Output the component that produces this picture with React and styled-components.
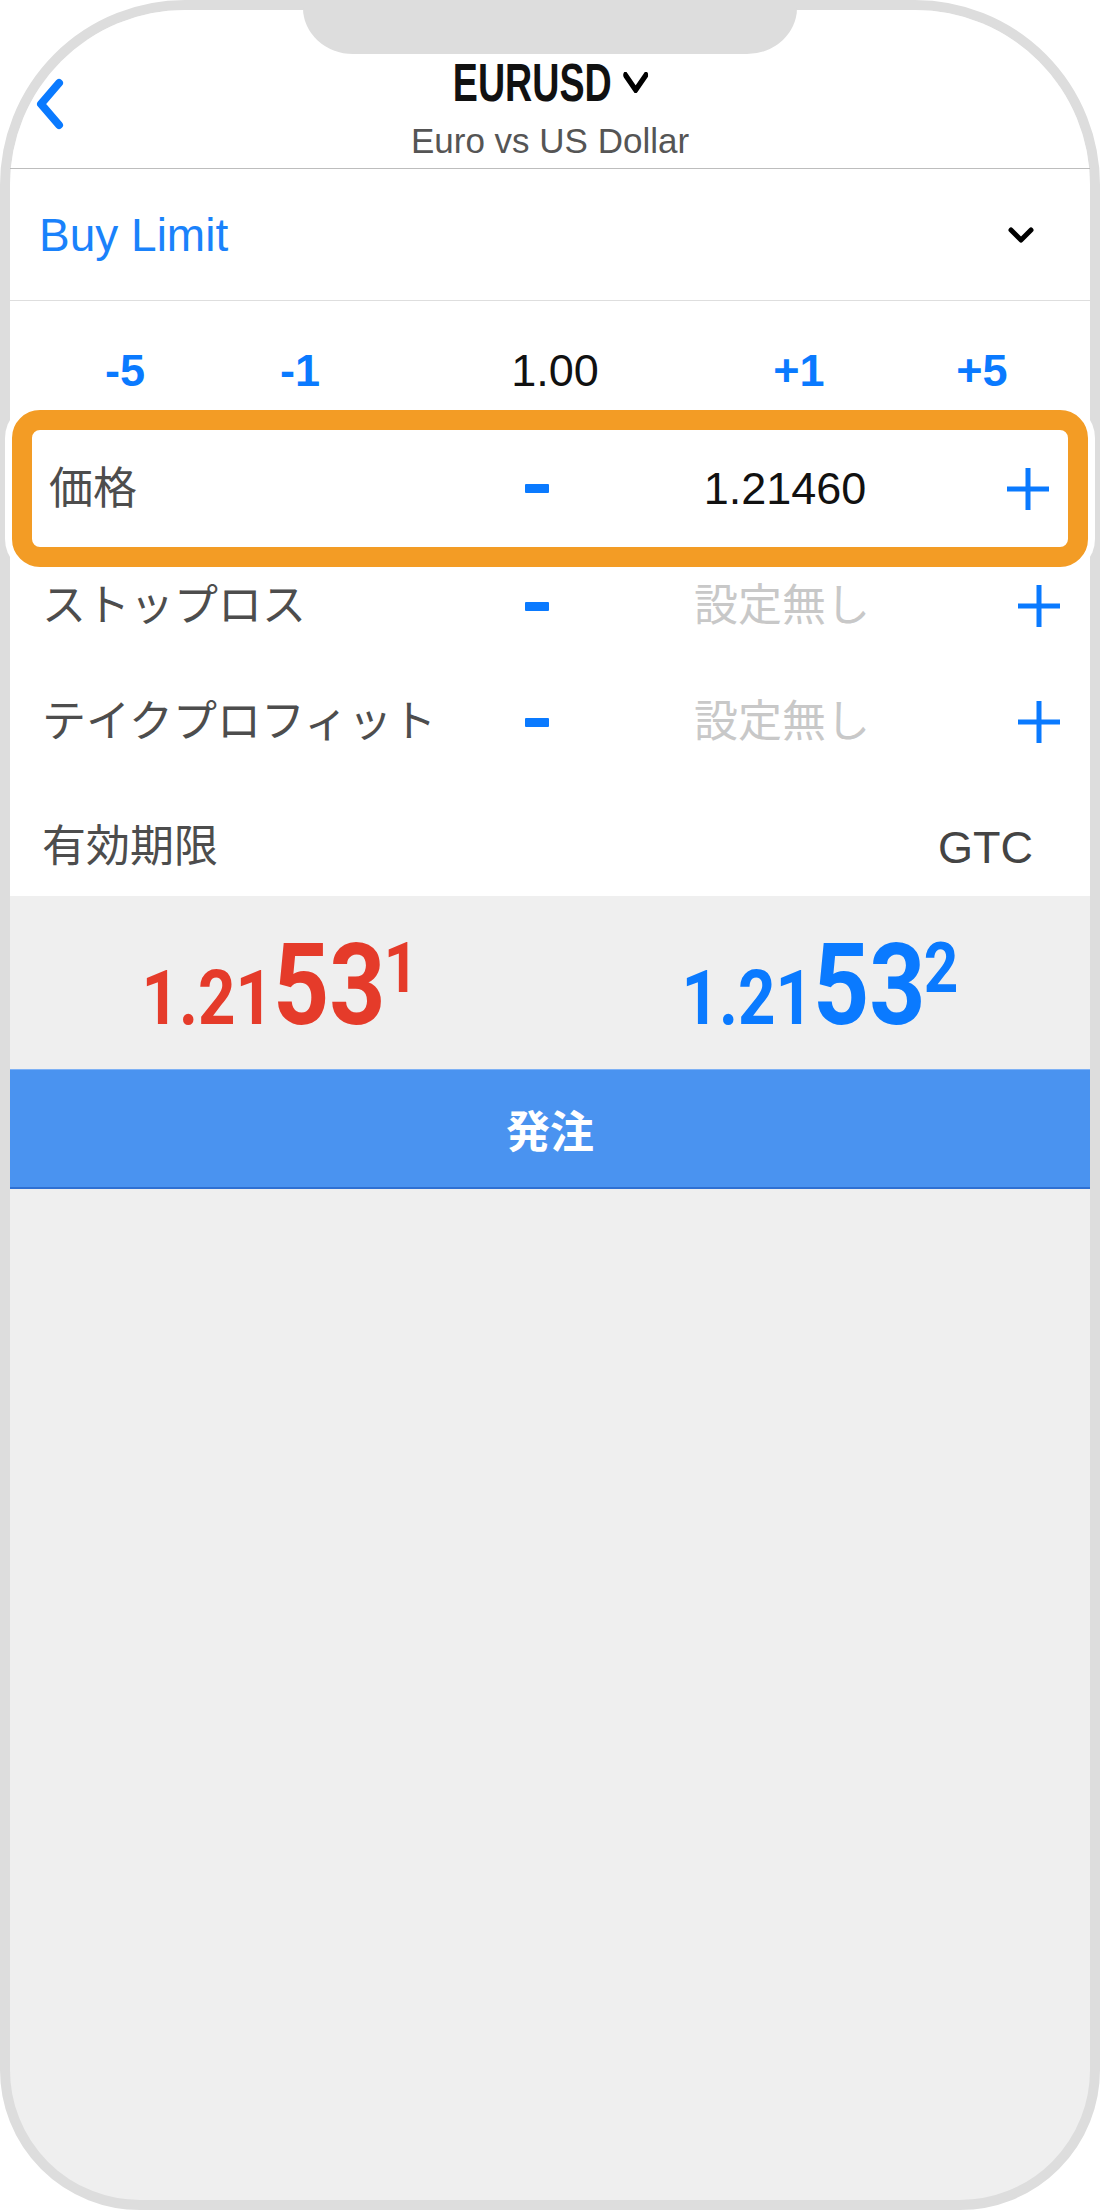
import React from 'react';
import styled, { createGlobalStyle } from 'styled-components';

const BLUE = '#0a7aff';

const GlobalStyle = createGlobalStyle`
  html, body {
    margin: 0;
    padding: 0;
    background: #fff;
  }
  body {
    font-family: "Liberation Sans", "Noto Sans CJK JP", sans-serif;
  }
`;

function BackIcon() {
  return (
    <svg width="40" height="60" viewBox="0 0 40 60">
      <polyline
        points="30,8 12,29 30,50"
        fill="none"
        stroke={BLUE}
        strokeWidth="8"
        strokeLinecap="round"
        strokeLinejoin="round"
      />
    </svg>
  );
}

function ChevronDown({ width = 26, height = 16, stroke = 5 }) {
  return (
    <svg width={width} height={height} viewBox={`0 0 ${width} ${height}`}>
      <polyline
        points={`3,3 ${width / 2},${height - 3} ${width - 3},3`}
        fill="none"
        stroke="#000"
        strokeWidth={stroke}
        strokeLinecap="round"
        strokeLinejoin="round"
      />
    </svg>
  );
}

function MinusIcon() {
  return (
    <svg width="24" height="9" viewBox="0 0 24 9">
      <rect width="24" height="9" rx="1" fill={BLUE} />
    </svg>
  );
}

function PlusIcon() {
  return (
    <svg width="42" height="42" viewBox="0 0 42 42">
      <path d="M21 0 V42 M0 21 H42" stroke={BLUE} strokeWidth="5" />
    </svg>
  );
}

export default function App() {
  return (
    <>
      <GlobalStyle />
      <Phone>
        <Notch />
        <Sheet>
          <Header>
            <BackButton aria-label="back">
              <BackIcon />
            </BackButton>
            <TitleBlock>
              <SymbolRow>
                <Symbol>EURUSD</Symbol>
                <ChevronDown width={35} height={21} stroke={6.5} />
              </SymbolRow>
              <Subtitle>Euro vs US Dollar</Subtitle>
            </TitleBlock>
          </Header>

          <OrderTypeRow>
            <OrderType>Buy Limit</OrderType>
            <ChevronDown />
          </OrderTypeRow>

          <LotRow>
            <LotStep>-5</LotStep>
            <LotStep>-1</LotStep>
            <LotStep $value>1.00</LotStep>
            <LotStep>+1</LotStep>
            <LotStep>+5</LotStep>
          </LotRow>

          <Highlight>
            <PriceRow>
              <Label>価格</Label>
              <IconCell>
                <MinusIcon />
              </IconCell>
              <Value>1.21460</Value>
              <IconCell>
                <PlusIcon />
              </IconCell>
            </PriceRow>
          </Highlight>

          <FieldRow>
            <Label>ストップロス</Label>
            <IconCell>
              <MinusIcon />
            </IconCell>
            <Value $empty>設定無し</Value>
            <IconCell>
              <PlusIcon />
            </IconCell>
          </FieldRow>
          <FieldRow>
            <Label>テイクプロフィット</Label>
            <IconCell>
              <MinusIcon />
            </IconCell>
            <Value $empty>設定無し</Value>
            <IconCell>
              <PlusIcon />
            </IconCell>
          </FieldRow>
          <ExpiryRow>
            <Label>有効期限</Label>
            <Expiry>GTC</Expiry>
          </ExpiryRow>
        </Sheet>

        <QuoteBar>
          <Quote $color="#e53b2a">
            <QuoteSmall>1.21</QuoteSmall>
            <QuoteBig>53</QuoteBig>
            <QuotePip>1</QuotePip>
          </Quote>
          <Quote $color={BLUE}>
            <QuoteSmall>1.21</QuoteSmall>
            <QuoteBig>53</QuoteBig>
            <QuotePip>2</QuotePip>
          </Quote>
        </QuoteBar>

        <SubmitButton>発注</SubmitButton>
        <Filler />
      </Phone>
    </>
  );
}

const Phone = styled.div`
  position: relative;
  box-sizing: border-box;
  width: 1100px;
  height: 2210px;
  border: 10px solid #dddddd;
  border-radius: 185px 185px 140px 140px;
  background: #efefef;
  display: flex;
  flex-direction: column;
`;

const Notch = styled.div`
  position: absolute;
  top: -10px;
  left: 293px;
  width: 494px;
  height: 54px;
  background: #dddddd;
  border-radius: 0 0 50px 50px / 0 0 46px 46px;
  z-index: 2;
`;

const Sheet = styled.div`
  display: flex;
  flex-direction: column;
  background: #fff;
  border-radius: 175px 175px 0 0;
`;

const Header = styled.header`
  display: grid;
  grid-template-columns: 120px 1fr 120px;
  height: 159px;
  box-sizing: border-box;
  border-bottom: 1px solid #bdbdbd;
`;

const BackButton = styled.button`
  align-self: start;
  justify-self: start;
  display: flex;
  margin: 65px 0 0 19px;
  padding: 0;
  border: 0;
  background: none;
`;

const TitleBlock = styled.div`
  display: flex;
  flex-direction: column;
  align-items: center;
  padding-top: 46px;
`;

const SymbolRow = styled.div`
  display: flex;
  align-items: center;
  gap: 16px;
  transform: scaleX(0.71);
`;

const Symbol = styled.span`
  font-size: 53px;
  line-height: 1;
  font-weight: 700;
  color: #111;
`;

const Subtitle = styled.div`
  margin-top: 14px;
  font-size: 35px;
  line-height: 1;
  color: #555;
`;

const OrderTypeRow = styled.div`
  display: flex;
  align-items: center;
  justify-content: space-between;
  height: 132px;
  box-sizing: border-box;
  padding: 0 56px 0 29px;
  border-bottom: 1px solid #dedede;
`;

const OrderType = styled.span`
  font-size: 46px;
  line-height: 1;
  color: #1a82fb;
`;

const LotRow = styled.div`
  display: grid;
  grid-template-columns: 178px 172px 338px 150px 216px;
  justify-items: center;
  padding: 47px 0 17px 26px;
`;

const LotStep = styled.span`
  font-size: 45px;
  line-height: 45px;
  font-weight: ${(p) => (p.$value ? 400 : 700)};
  color: ${(p) => (p.$value ? '#111' : BLUE)};
`;

const Highlight = styled.div`
  position: relative;
  z-index: 1;
  margin: 0 2px -19px;
  border: 20px solid #f39c25;
  border-radius: 28px;
  box-shadow: 0 0 0 7px #fff;
  background: #fff;
`;

const FieldRow = styled.div`
  display: grid;
  grid-template-columns: 1fr 60px 442px 60px;
  align-items: center;
  height: 116px;
  padding: 0 21px 0 32px;
`;

const PriceRow = styled(FieldRow)`
  grid-template-columns: 1fr 60px 436px 50px;
  height: 117px;
  padding: 0 15px 0 17px;
`;

const ExpiryRow = styled.div`
  display: flex;
  align-items: center;
  justify-content: space-between;
  height: 116px;
  box-sizing: border-box;
  padding: 18px 57px 0 32px;
`;

const Label = styled.span`
  font-size: 44px;
  line-height: 1;
  color: #4d4d4d;
  white-space: nowrap;
`;

const IconCell = styled.span`
  display: flex;
  justify-content: center;
  align-items: center;
`;

const Value = styled.span`
  text-align: center;
  padding-right: ${(p) => (p.$empty ? '12px' : '0')};
  font-size: ${(p) => (p.$empty ? '44px' : '45px')};
  line-height: 1;
  color: ${(p) => (p.$empty ? '#c8c8c8' : '#111')};
`;

const Expiry = styled.span`
  font-size: 45px;
  line-height: 1;
  color: #444;
`;

const QuoteBar = styled.div`
  display: grid;
  grid-template-columns: 1fr 1fr;
  padding: 32px 0 27px;
`;

const Quote = styled.div`
  justify-self: center;
  display: flex;
  align-items: baseline;
  font-family: Roboto, "Liberation Sans", sans-serif;
  font-weight: 700;
  line-height: 1;
  color: ${(p) => p.$color};
  transform: scaleX(0.86);
`;

const QuoteSmall = styled.span`
  font-size: 76px;
`;

const QuoteBig = styled.span`
  font-size: 114px;
`;

const QuotePip = styled.span`
  align-self: flex-start;
  margin: 5px 0 0 -2px;
  font-size: 70px;
`;

const SubmitButton = styled.button`
  width: 100%;
  height: 120px;
  box-sizing: border-box;
  padding: 0;
  border: 0;
  border-top: 1px solid #7eb1f5;
  border-bottom: 2px solid #2f70d2;
  background: #4a93f0;
  color: #fff;
  font-family: "Liberation Sans", "Noto Sans CJK JP", sans-serif;
  font-size: 44px;
  font-weight: 700;
`;

const Filler = styled.div`
  flex: 1;
`;
